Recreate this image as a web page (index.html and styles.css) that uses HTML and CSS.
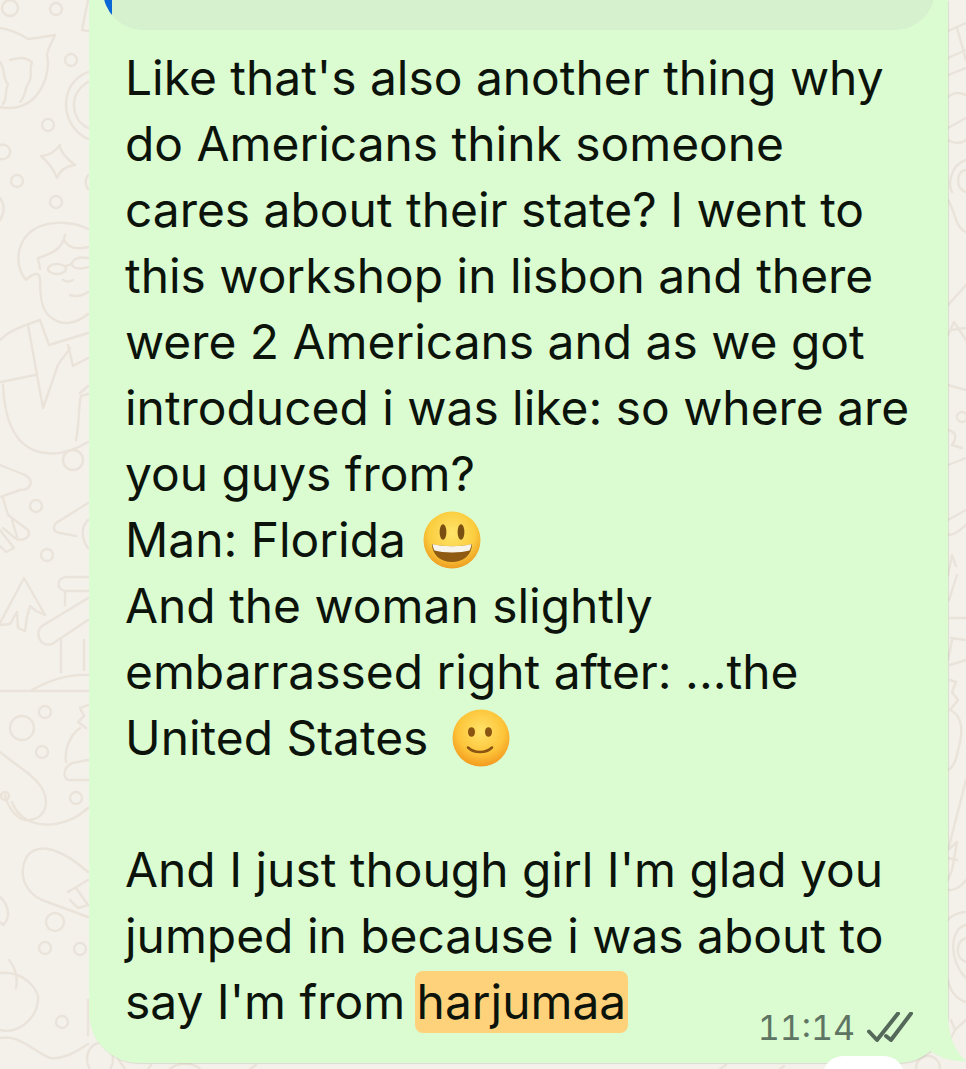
FILE: index.html
```html
<!DOCTYPE html>
<html lang="en">
<head>
<meta charset="utf-8">
<title>Chat message</title>
<link rel="stylesheet" href="styles.css">
</head>
<body>
<main class="chat">
  <svg class="wallpaper" viewBox="0 0 966 1069" aria-hidden="true">
    <circle cx="10" cy="8" r="8"/><circle cx="56" cy="9" r="6"/>
    <path d="M88 0 L82 30 L88 31"/>
    <path d="M0 28 C12 30 22 35 28 39 C38 38 48 36 55 35 C52 42 48 48 47 55 C50 70 45 88 32 100 C22 108 10 109 0 107"/>
    <path d="M10 60 C18 58 24 56 32 62 C28 72 34 76 28 84 C24 90 26 96 20 102"/>
    <path d="M0 62 C6 70 2 78 8 84 C4 92 8 98 3 104"/>
    <circle cx="71" cy="60" r="6"/>
    <path d="M88 72 C72 78 66 92 66 105 C66 120 76 134 88 139"/>
    <path d="M88 82 C78 88 74 96 74 105 C74 116 80 124 88 128"/>
    <circle cx="48" cy="125" r="6"/>
    <path d="M0 145 C7 143 11 149 10 153 C9 158 4 160 0 159"/>
    <path d="M41 156 C50 155 55 152 60 145 C60 152 66 158 75 165 C66 166 60 170 57 178 C54 170 48 162 41 156 Z"/>
    <circle cx="17" cy="181" r="6"/><path d="M88 175 C85 180 85 185 88 189"/>
    <circle cx="56" cy="202" r="6"/><path d="M0 198 C5 205 5 212 0 220"/>

    <path d="M88 229 C70 220 42 220 28 234 C15 248 16 268 26 280 C34 272 40 272 40 280 C40 298 42 312 52 318 C62 326 76 324 88 314"/>
    <path d="M65 235 C63 245 58 252 38 258 L40 269 M64 240 C68 248 76 250 88 247"/>
    <ellipse cx="57" cy="269" rx="9" ry="5"/><path d="M66 266 L72 264 M88 258 C78 256 72 260 72 264 C72 268 80 270 88 267"/>
    <path d="M63 280 C67 282 70 282 73 280 M70 295 C76 297 82 296 88 292"/>
    <path d="M0 340 C10 330 25 325 40 320 M28 325 L43 408 L58 365 C62 358 66 355 70 348"/>
    <path d="M40 320 L49 345 L88 333 M68 345 L73 366 L88 358"/>
    <path d="M1 382 L35 375 M3 385 C5 430 20 450 45 453 C60 455 75 450 88 442"/>
    <path d="M76 440 C80 420 78 405 81 396 L88 394 M88 386 L80 393"/>
    <circle cx="73" cy="460" r="10"/><circle cx="36" cy="506" r="6"/><circle cx="47" cy="555" r="6"/>
    <path d="M0 465 L25 475 C34 480 32 490 20 490 L0 497"/>
    <path d="M3 498 L8 515 L28 530 C32 538 22 542 15 538 L3 528 M12 520 L18 540 M0 530 L14 548 L6 552 L0 546"/>
    <path d="M88 503 L56 523 C52 528 54 532 60 533 L76 536 M88 520 C80 528 82 540 88 548"/>

    <path d="M0 623 L24 578 L45 615 L36 611 L30 606 L27 617 L25 631 L18 628 L17 612 L10 624 L0 625"/>
    <path d="M88 598 L42 626 C34 632 40 648 52 644 L88 620"/>
    <path d="M88 577 L66 577 C56 578 56 590 66 591 L88 591 M65 591 L65 605 M61 640 L61 672 M84 640 L84 670"/>
    <path d="M32 690 C50 680 70 674 88 675 M0 691 L88 691"/>
    <circle cx="45" cy="712" r="6"/><circle cx="22" cy="728" r="12"/><circle cx="42" cy="752" r="6"/><circle cx="76" cy="798" r="6"/>
    <path d="M88 705 L80 708 L84 716 L78 722 L86 728 M80 728 C70 735 64 750 66 762 M88 760 L72 763 C62 768 62 782 72 780 L88 780"/>
    <path d="M0 752 C15 765 35 775 43 790 C50 805 44 818 30 820 C18 822 8 808 5 795"/>
    <circle cx="5" cy="796" r="4"/>
    <path d="M12 802 C22 830 62 832 88 808"/>
    <path d="M88 917 L42 900 C25 892 18 875 26 858 C36 842 58 846 88 872"/>
    <path d="M68 892 L88 880 M70 900 L78 908 L88 905 M76 888 L88 905"/>
    <path d="M0 897 C9 905 11 918 3 925 L0 922"/>
    <circle cx="55" cy="922" r="9"/><circle cx="45" cy="948" r="6"/><circle cx="80" cy="949" r="6"/>
    <path d="M0 973 C25 970 40 992 38 1000 C36 1022 15 1034 0 1030"/>
    <path d="M9 960 C16 968 18 980 16 988"/>
    <circle cx="62" cy="1022" r="6"/><path d="M88 1000 L88 1035"/>
    <path d="M0 1038 C20 1034 34 1052 50 1058 C65 1060 78 1050 88 1044 M112 1050 L125 1069"/>
    <ellipse cx="100" cy="1059" rx="13" ry="16"/>
    <path d="M148 1069 L151 1065 M170 1069 C178 1062 192 1062 200 1069 M250 1069 L256 1065"/>

    <path d="M948 31 L966 23 M957 28 L966 60 M948 58 L966 50 M948 75 L966 68 M948 97 C954 92 960 92 966 95 M948 128 L966 118 M948 140 C954 144 960 144 966 140"/>
    <path d="M966 170 C956 170 955 190 966 192 M966 160 C950 165 948 185 952 192 M948 200 C955 210 955 228 966 232"/>
    <path d="M948 305 L966 285 M948 335 L954 322 L966 340 M951 330 L966 328 M948 385 L966 390"/>
    <circle cx="962" cy="417" r="5"/>
    <path d="M948 430 C958 432 956 440 952 445 L962 448 M948 465 L966 458"/>
    <path d="M948 520 L966 510 M948 535 C955 535 960 530 966 525 M948 575 L952 555 L956 566 M949 600 L957 575 M950 618 L966 618 M951 638 L966 640 M950 665 L966 660 M948 660 L952 640"/>
    <path d="M950 680 L956 682 L952 692 L958 700 L950 710 C962 715 964 730 958 750 C956 762 952 768 948 770"/>
    <path d="M966 780 L948 850 L957 842 L952 870 L948 880 M948 858 L957 860 M966 880 C962 885 958 890 948 890"/>
    <path d="M948 920 C952 915 960 912 966 912"/>
    <path d="M966 925 C950 928 948 960 966 978 M966 938 C955 942 955 958 966 962 M948 980 C950 992 958 1000 966 1002"/>
    <path d="M966 1020 L955 1030 L951 1020 M955 1030 L951 1038"/>
    <circle cx="928" cy="1068" r="12"/>
    <path d="M720 1069 L726 1065 M780 1069 L784 1066"/>
  </svg>

  <article class="bubble">
    <svg class="tail" viewBox="0 0 70 50" aria-hidden="true"><path d="M0 0 L52 0 C52 18 58 36 70 46 C55 47 42 42 33 35 L0 48 Z"/></svg>
    <div class="quote"><span class="quote-bar"></span></div>
    <p class="message">Like that's also another thing why<br>
do Americans think someone<br>
cares about their state? I went to<br>
this workshop in lisbon and there<br>
were 2 Americans and as we got<br>
introduced i was like: so where are<br>
you guys from?<br>
Man: Florida <svg class="emoji" viewBox="0 0 58 58" role="img" aria-label="😃">
  <defs>
    <radialGradient id="face" cx="50%" cy="38%" r="62%"><stop offset="0" stop-color="#fee56c"/><stop offset=".65" stop-color="#fbcd3f"/><stop offset="1" stop-color="#ee9d20"/></radialGradient>
    <radialGradient id="face2" cx="50%" cy="38%" r="62%"><stop offset="0" stop-color="#ffe36a"/><stop offset=".65" stop-color="#fdc53a"/><stop offset="1" stop-color="#f39a1e"/></radialGradient>
  </defs>
  <circle cx="29" cy="29" r="28.5" fill="url(#face)"/>
  <ellipse cx="20" cy="21" rx="3.4" ry="7.8" fill="#7a4f12"/><ellipse cx="38" cy="21" rx="3.4" ry="7.8" fill="#7a4f12"/>
  <path d="M9 33 C20 36 38 36 49 33 C49 44 40 51 29 51 C18 51 9 44 9 33 Z" fill="#8f5b12"/>
  <path d="M9.500 33 C20 36 38 36 48.500 33 C48 36 47.500 38 46.500 39.500 C38 42 20 42 11.500 39.500 C10.500 38 10 36 9.500 33 Z" fill="#f7f4ec"/>
</svg><br>
And the woman slightly<br>
embarrassed right after: ...the<br>
United States <svg class="emoji emoji-wide" viewBox="0 0 58 58" role="img" aria-label="🙂">
  <circle cx="29" cy="29" r="28.5" fill="url(#face2)"/>
  <ellipse cx="19.500" cy="23" rx="3.500" ry="4.800" fill="#8a5413"/><ellipse cx="36.500" cy="23" rx="3.500" ry="4.800" fill="#8a5413"/>
  <path d="M16 38.500 C22 44.500 34 44.500 40 38.500" fill="none" stroke="#8a5413" stroke-width="2.500" stroke-linecap="round"/>
</svg><br>
<br>
And I just though girl I'm glad you<br>
jumped in because i was about to<br>
say I'm from <mark class="highlight">harjumaa</mark></p>
    <div class="meta">
      <time class="time">11:14</time>
      <svg class="ticks" viewBox="0 0 46 32" aria-hidden="true"><path d="M2 19.500 L10 28 L31 1.500 M19 24 L24 28 L44 1.500"/></svg>
    </div>
  </article>
  <div class="reaction"></div>
</main>
</body>
</html>
```

FILE: styles.css
```css
html, body {
  margin: 0;
  height: 1069px;
  overflow: hidden;
}

body {
  background: #f4f0ea;
  font-family: Inter, "Liberation Sans", sans-serif;
}

.chat {
  position: relative;
  height: 1069px;
  overflow: hidden;
  padding-left: 89px;
  box-sizing: border-box;
}

.wallpaper {
  position: absolute;
  inset: 0;
  width: 966px;
  height: 1069px;
  fill: none;
  stroke: #eae3da;
  stroke-width: 2.4;
  stroke-linecap: round;
  stroke-linejoin: round;
}

.bubble {
  position: relative;
  display: flex;
  flex-direction: column;
  width: 859px;
  height: 1063px;
  box-sizing: border-box;
  background: #dbfbd1;
  border-radius: 0 0 50px 50px;
  box-shadow: 1px 1px 1px rgba(90, 90, 70, 0.14);
}

.quote {
  flex: none;
  height: 40px;
  width: 832px;
  margin: -10px 0 0 14px;
  border-radius: 0 0 40px 40px;
  background: #d5f1ce;
  overflow: hidden;
}

.quote-bar {
  display: block;
  width: 9px;
  height: 100%;
  background: #0a68d6;
}

.message {
  margin: 15px 0 0 36px;
  font-size: 47.9px;
  line-height: 66px;
  font-weight: 400;
  color: #0b130b;
  white-space: nowrap;
}

.emoji {
  display: inline-block;
  width: 58px;
  height: 58px;
  margin-left: 4px;
  vertical-align: -12px;
  overflow: visible;
}

.emoji-wide {
  margin-left: 10px;
}

.highlight {
  display: inline-block;
  height: 62px;
  line-height: 62px;
  margin-left: -4px;
  padding: 0 2px;
  border-radius: 8px;
  background: #fed27a;
  color: #0b130b;
}

.meta {
  position: absolute;
  right: 35px;
  bottom: 15px;
  display: flex;
  align-items: center;
  gap: 12px;
}

.time {
  font-size: 34px;
  line-height: 40px;
  font-variant-numeric: tabular-nums;
  color: #5f7563;
}

.ticks {
  width: 46px;
  height: 32px;
  fill: none;
  stroke: #55695a;
  stroke-width: 4;
  stroke-linecap: round;
  stroke-linejoin: round;
}

.tail {
  position: absolute;
  right: -18px;
  bottom: -2px;
  width: 70px;
  height: 50px;
  fill: #dbfbd1;
}

.reaction {
  position: absolute;
  left: 823px;
  top: 1056px;
  width: 81px;
  height: 40px;
  border-radius: 26px;
  background: #ffffff;
}
```
